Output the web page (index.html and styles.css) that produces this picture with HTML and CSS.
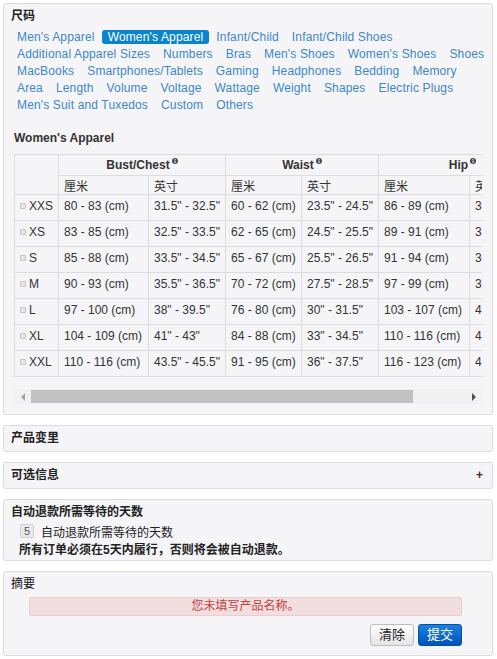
FILE: index.html
```html
<!DOCTYPE html>
<html>
<head>
<meta charset="utf-8">
<link rel="stylesheet" href="styles.css">
</head>
<body>
<div class="panel panel-size">
  <div class="title">尺码</div>
  <div class="links">
    <a>Men's Apparel</a><a class="active">Women's Apparel</a><a>Infant/Child</a><a>Infant/Child Shoes</a>
    <a>Additional Apparel Sizes</a><a>Numbers</a><a>Bras</a><a>Men's Shoes</a><a>Women's Shoes</a><a>Shoes</a>
    <a>MacBooks</a><a>Smartphones/Tablets</a><a>Gaming</a><a>Headphones</a><a>Bedding</a><a>Memory</a>
    <a>Area</a><a>Length</a><a>Volume</a><a>Voltage</a><a>Wattage</a><a>Weight</a><a>Shapes</a><a>Electric Plugs</a>
    <a>Men's Suit and Tuxedos</a><a>Custom</a><a>Others</a>
  </div>
  <div class="section">
    <div class="section-title">Women's Apparel</div>
    <div class="table-wrap">
      <table class="size-table">
        <colgroup>
          <col class="c-label"><col class="c-w90"><col class="c-w77"><col class="c-w76"><col class="c-w77"><col class="c-w91"><col class="c-w77">
        </colgroup>
        <thead>
          <tr class="h1">
            <th rowspan="2"></th>
            <th colspan="2">Bust/Chest<svg class="info" width="6" height="6" viewBox="0 0 6 6"><circle cx="3" cy="3" r="3" fill="#4a4a4a"/><rect x="2.5" y="1" width="1" height="1" fill="#fff"/><rect x="2.5" y="2.5" width="1" height="2.5" fill="#fff"/></svg></th>
            <th colspan="2">Waist<svg class="info" width="6" height="6" viewBox="0 0 6 6"><circle cx="3" cy="3" r="3" fill="#4a4a4a"/><rect x="2.5" y="1" width="1" height="1" fill="#fff"/><rect x="2.5" y="2.5" width="1" height="2.5" fill="#fff"/></svg></th>
            <th colspan="2">Hip<svg class="info" width="6" height="6" viewBox="0 0 6 6"><circle cx="3" cy="3" r="3" fill="#4a4a4a"/><rect x="2.5" y="1" width="1" height="1" fill="#fff"/><rect x="2.5" y="2.5" width="1" height="2.5" fill="#fff"/></svg></th>
          </tr>
          <tr class="h2">
            <th>厘米</th><th>英寸</th><th>厘米</th><th>英寸</th><th>厘米</th><th>英寸</th>
          </tr>
        </thead>
        <tbody>
          <tr><td><span class="chk"></span>XXS</td><td>80 - 83 (cm)</td><td>31.5" - 32.5"</td><td>60 - 62 (cm)</td><td>23.5" - 24.5"</td><td>86 - 89 (cm)</td><td>34" - 35"</td></tr>
          <tr><td><span class="chk"></span>XS</td><td>83 - 85 (cm)</td><td>32.5" - 33.5"</td><td>62 - 65 (cm)</td><td>24.5" - 25.5"</td><td>89 - 91 (cm)</td><td>35" - 36"</td></tr>
          <tr><td><span class="chk"></span>S</td><td>85 - 88 (cm)</td><td>33.5" - 34.5"</td><td>65 - 67 (cm)</td><td>25.5" - 26.5"</td><td>91 - 94 (cm)</td><td>36" - 37"</td></tr>
          <tr><td><span class="chk"></span>M</td><td>90 - 93 (cm)</td><td>35.5" - 36.5"</td><td>70 - 72 (cm)</td><td>27.5" - 28.5"</td><td>97 - 99 (cm)</td><td>38" - 39"</td></tr>
          <tr><td><span class="chk"></span>L</td><td>97 - 100 (cm)</td><td>38" - 39.5"</td><td>76 - 80 (cm)</td><td>30" - 31.5"</td><td>103 - 107 (cm)</td><td>40.5" - 42"</td></tr>
          <tr><td><span class="chk"></span>XL</td><td>104 - 109 (cm)</td><td>41" - 43"</td><td>84 - 88 (cm)</td><td>33" - 34.5"</td><td>110 - 116 (cm)</td><td>43" - 45.5"</td></tr>
          <tr><td><span class="chk"></span>XXL</td><td>110 - 116 (cm)</td><td>43.5" - 45.5"</td><td>91 - 95 (cm)</td><td>36" - 37.5"</td><td>116 - 123 (cm)</td><td>45.5" - 48.5"</td></tr>
        </tbody>
      </table>
    </div>
    <div class="scrollbar">
      <div class="sb-btn"><span class="arr-left"></span></div>
      <div class="sb-thumb"></div>
      <div class="sb-space"></div>
      <div class="sb-btn"><span class="arr-right"></span></div>
    </div>
  </div>
</div>

<div class="panel panel-simple">
  <div class="title">产品变里</div>
</div>

<div class="panel panel-simple panel-row">
  <div class="title">可选信息</div>
  <div class="plus">+</div>
</div>

<div class="panel panel-refund">
  <div class="title">自动退款所需等待的天数</div>
  <div class="refund-row"><span class="num-box">5</span><span>自动退款所需等待的天数</span></div>
  <div class="refund-note">所有订单必须在5天内履行，否则将会被自动退款。</div>
</div>

<div class="panel panel-summary">
  <div class="title title-normal">摘要</div>
  <div class="form-area">
    <div class="error">您未填写产品名称。</div>
    <div class="buttons">
      <button class="btn btn-default">清除</button>
      <button class="btn btn-primary">提交</button>
    </div>
  </div>
</div>
</body>
</html>
```

FILE: styles.css
```css
* { box-sizing: border-box; }

body {
  margin: 3px 4px 3px 3px;
  font-family: "Liberation Sans", "Noto Sans CJK SC", sans-serif;
  font-size: 12px;
  color: #333;
  background: #fff;
}

.panel {
  background: #f5f5f7;
  border: 1px solid #dcdce0;
  border-radius: 3px;
  margin-bottom: 10px;
}

.title {
  font-size: 12px;
  font-weight: bold;
  line-height: 17px;
  color: #222;
}

.title-normal { font-weight: normal; color: #111; }

.panel-size { padding: 4px 1px 10px 7px; }

.links {
  display: flex;
  flex-wrap: wrap;
  row-gap: 3px;
  column-gap: 1px;
  margin-top: 5px;
}

.links a {
  line-height: 14px;
  padding: 0 6px;
  color: #3d87c9;
  text-decoration: none;
  border-radius: 3px;
  font-size: 12px;
  letter-spacing: 0.15px;
}

.links a.active {
  background: #0a84cf;
  color: #fff;
}

.section { margin: 19px 9px 0 3px; }

.section-title {
  font-size: 12px;
  font-weight: bold;
  line-height: 15px;
  margin-bottom: 8px;
  color: #333;
}

.table-wrap { overflow: hidden; }

.size-table {
  border-collapse: collapse;
  table-layout: fixed;
  width: 532px;
}

.c-label { width: 44px; }
.c-w90 { width: 90px; }
.c-w77 { width: 77px; }
.c-w76 { width: 76px; }
.c-w91 { width: 91px; }

.size-table th,
.size-table td {
  border: 1px solid #dcdcdc;
  padding: 0 5px;
  white-space: nowrap;
  overflow: hidden;
  font-size: 12px;
  color: #333;
}

.size-table .h1 { height: 21px; }
.size-table .h1 th { font-weight: bold; text-align: center; vertical-align: middle; }
.size-table .h2 { height: 19px; }
.size-table .h2 th { font-weight: normal; text-align: left; vertical-align: middle; }

.size-table tbody tr { height: 26px; }
.size-table tbody td {
  vertical-align: top;
  padding-top: 4px;
  line-height: 15px;
}

.info {
  vertical-align: 5px;
  margin-left: 2px;
}

.chk {
  display: inline-block;
  width: 6px;
  height: 6px;
  border: 1px solid #c4c4c4;
  background: #e6e6e6;
  border-radius: 1px;
  margin-right: 3px;
  vertical-align: 1px;
}

.scrollbar {
  display: flex;
  height: 15px;
  margin-top: 12px;
  background: #f1f1f1;
}

.sb-btn {
  width: 17px;
  display: flex;
  align-items: center;
  justify-content: center;
}

.arr-left {
  width: 0; height: 0;
  border-top: 4px solid transparent;
  border-bottom: 4px solid transparent;
  border-right: 4px solid #a3a3a3;
}

.arr-right {
  width: 0; height: 0;
  border-top: 4px solid transparent;
  border-bottom: 4px solid transparent;
  border-left: 4px solid #505050;
}

.sb-thumb {
  width: 382px;
  margin: 1px 0;
  background: #c1c1c1;
}

.sb-space { flex: 1; }

.panel-simple { padding: 4px 9px 4px 7px; }

.panel-row {
  display: flex;
  justify-content: space-between;
  align-items: center;
}

.plus {
  font-weight: bold;
  font-size: 12px;
  line-height: 17px;
  color: #333;
}

.panel-refund { padding: 4px 9px 1px 7px; }

.refund-row {
  display: flex;
  align-items: center;
  height: 20px;
  margin-left: 9px;
  color: #222;
}

.num-box {
  display: inline-block;
  width: 14px;
  height: 14px;
  line-height: 12px;
  text-align: center;
  border: 1px solid #cfcfcf;
  background: #e9e9e9;
  border-radius: 2px;
  color: #555;
  font-size: 11px;
  margin-right: 7px;
}

.refund-note {
  margin-left: 8px;
  font-weight: bold;
  line-height: 18px;
  color: #222;
}

.panel-summary { padding: 4px 9px 9px 7px; }

.form-area { margin: 4px 21px 0 18px; }

.error {
  height: 19px;
  line-height: 17px;
  background: #f2dede;
  border: 1px solid #ebccd1;
  border-radius: 2px;
  color: #c0423f;
  text-align: center;
  font-size: 12px;
}

.buttons {
  display: flex;
  justify-content: flex-end;
  gap: 4px;
  margin-top: 8px;
}

.btn {
  width: 44px;
  height: 22px;
  border-radius: 3px;
  font-family: "Liberation Sans", "Noto Sans CJK SC", sans-serif;
  font-size: 13px;
  padding: 0;
  line-height: 20px;
}

.btn-default {
  background: linear-gradient(#ffffff, #e4e4e4);
  border: 1px solid #bdbdbd;
  color: #222;
}

.btn-primary {
  background: linear-gradient(#1a80e2, #0054b8);
  border: 1px solid #0050a6;
  color: #fff;
}
```
